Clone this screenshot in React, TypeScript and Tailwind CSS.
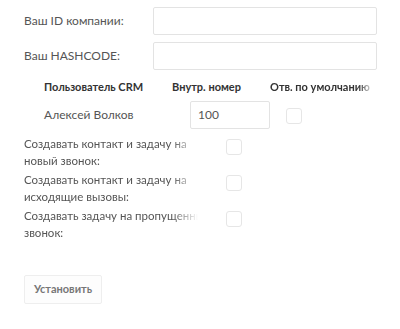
const fade = '[mask-image:linear-gradient(to_right,black_85%,transparent)]'

function Checkbox() {
  return <span className="block w-[16px] h-[16px] rounded-[3px] border border-[#e6e6e6] bg-white" />
}

function FieldRow({ label }: { label: string }) {
  return (
    <div className="flex items-center">
      <label className="w-[129px] text-[#555]">{label}</label>
      <input className="w-[224px] h-[28px] border border-[#e3e3e3] rounded-[2px] outline-none px-2" />
    </div>
  )
}

function OptionRow({ text }: { text: string }) {
  return (
    <div className="flex items-start">
      <div className={`w-[174px] overflow-hidden ${fade}`}>
        <p className="w-[190px] leading-[17px] text-[11.5px] text-[#555]">{text}</p>
      </div>
      <div className="pl-[28px] pt-[4px]">
        <Checkbox />
      </div>
    </div>
  )
}

export default function App() {
  return (
    <div
      className="w-[400px] h-[329px] bg-white pl-[24px] pt-[7px] text-[12px]"
      style={{ fontFamily: 'Lato, Roboto, sans-serif' }}
    >
      <div className="flex flex-col gap-[7px]">
        <FieldRow label="Ваш ID компании:" />
        <FieldRow label="Ваш HASHCODE:" />
      </div>

      <div className="pl-[20px] mt-[9px] flex font-bold text-[#333] text-[11px]">
        <span className="w-[128px]">Пользователь CRM</span>
        <span className="w-[98px]">Внутр. номер</span>
        <span className={`w-[104px] whitespace-nowrap overflow-hidden ${fade}`}>Отв. по умолчанию</span>
      </div>

      <div className="pl-[20px] mt-[5px] flex items-center">
        <span className="w-[146px] text-[#555]">Алексей Волков</span>
        <input
          defaultValue="100"
          className="w-[80px] h-[28px] border border-[#e3e3e3] rounded-[2px] outline-none px-[7px] text-[#555]"
        />
        <div className="pl-[16px] pt-[2px]">
          <Checkbox />
        </div>
      </div>

      <div className="mt-[6px] flex flex-col gap-[2px]">
        <OptionRow text="Создавать контакт и задачу на новый звонок:" />
        <OptionRow text="Создавать контакт и задачу на исходящие вызовы:" />
        <OptionRow text="Создавать задачу на пропущенный звонок:" />
      </div>

      <button className="mt-[34px] h-[29px] px-[9px] border border-[#eee] rounded-[2px] bg-[#fdfdfd] text-[#777] font-bold text-[11px]">
        Установить
      </button>
    </div>
  )
}
